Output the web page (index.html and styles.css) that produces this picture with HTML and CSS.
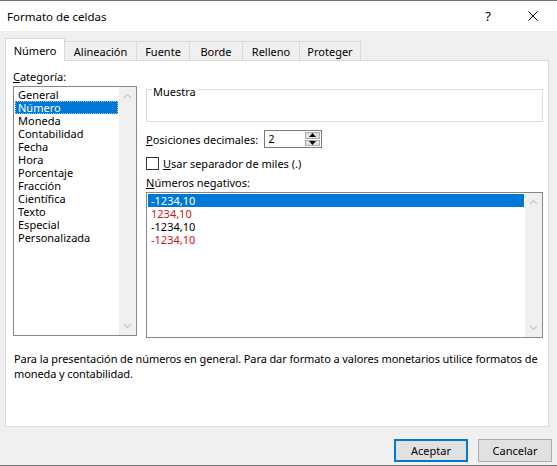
FILE: index.html
```html
<!DOCTYPE html>
<html lang="es">
<head>
<meta charset="utf-8">
<title>Formato de celdas</title>
<link rel="stylesheet" href="styles.css">
</head>
<body>
<div class="window">
  <div class="titlebar">
    <span class="title">Formato de celdas</span>
    <span class="help">?</span>
    <span class="close">
      <svg width="10" height="10" viewBox="0 0 10 10"><path d="M0.5 0.5 L9.5 9.5 M9.5 0.5 L0.5 9.5" stroke="#000" stroke-width="1" fill="none"/></svg>
    </span>
  </div>
  <div class="body">
    <div class="tabs">
      <div class="tab active t1">Número</div>
      <div class="tab t2">Alineación</div>
      <div class="tab t3">Fuente</div>
      <div class="tab t4">Borde</div>
      <div class="tab t5">Relleno</div>
      <div class="tab t6">Proteger</div>
    </div>
    <div class="panel">
      <div class="columns">
        <div class="leftcol">
          <div class="label"><u>C</u>ategoría:</div>
          <div class="listbox catlist">
            <div class="items">
              <div class="item">General</div>
              <div class="item selected focus">Número</div>
              <div class="item">Moneda</div>
              <div class="item">Contabilidad</div>
              <div class="item">Fecha</div>
              <div class="item">Hora</div>
              <div class="item">Porcentaje</div>
              <div class="item">Fracción</div>
              <div class="item">Científica</div>
              <div class="item">Texto</div>
              <div class="item">Especial</div>
              <div class="item">Personalizada</div>
            </div>
            <div class="scrollbar">
              <svg class="arr" width="9" height="6" viewBox="0 0 9 6"><path d="M1 5 L4.5 1.5 L8 5" stroke="#c4c4c4" stroke-width="1.2" fill="none"/></svg>
              <svg class="arr" width="9" height="6" viewBox="0 0 9 6"><path d="M1 1 L4.5 4.5 L8 1" stroke="#c4c4c4" stroke-width="1.2" fill="none"/></svg>
            </div>
          </div>
        </div>
        <div class="rightcol">
          <div class="groupbox">
            <span class="legend">Muestra</span>
          </div>
          <div class="row decimals">
            <span><u>P</u>osiciones decimales:</span>
            <div class="spin">
              <span class="spinval">2</span>
              <div class="spinbtns">
                <div class="sbtn"><svg width="7" height="4" viewBox="0 0 7 4"><path d="M0 4 L3.5 0 L7 4 Z" fill="#000"/></svg></div>
                <div class="sbtn"><svg width="7" height="4" viewBox="0 0 7 4"><path d="M0 0 L3.5 4 L7 0 Z" fill="#000"/></svg></div>
              </div>
            </div>
          </div>
          <div class="row check">
            <span class="box"></span>
            <span><u>U</u>sar separador de miles (.)</span>
          </div>
          <div class="label neglabel"><u>N</u>úmeros negativos:</div>
          <div class="listbox neglist">
            <div class="items">
              <div class="item selected">-1234,10</div>
              <div class="item red">1234,10</div>
              <div class="item">-1234,10</div>
              <div class="item red">-1234,10</div>
            </div>
            <div class="scrollbar">
              <svg class="arr" width="9" height="6" viewBox="0 0 9 6"><path d="M1 5 L4.5 1.5 L8 5" stroke="#c4c4c4" stroke-width="1.2" fill="none"/></svg>
              <svg class="arr" width="9" height="6" viewBox="0 0 9 6"><path d="M1 1 L4.5 4.5 L8 1" stroke="#c4c4c4" stroke-width="1.2" fill="none"/></svg>
            </div>
          </div>
        </div>
      </div>
      <p class="desc">Para la presentación de números en general. Para dar formato a valores monetarios utilice formatos de moneda y contabilidad.</p>
    </div>
    <div class="buttons">
      <div class="btn default">Aceptar</div>
      <div class="btn">Cancelar</div>
    </div>
  </div>
</div>
</body>
</html>
```
FILE: styles.css
```css
* { box-sizing: border-box; }
html, body { margin: 0; padding: 0; }
body {
  width: 557px;
  height: 466px;
  overflow: hidden;
  background: #f0f0f0;
  font-family: "Noto Sans", "DejaVu Sans", sans-serif;
  font-size: 11px;
  color: #000;
}
u { text-decoration: underline; text-underline-offset: 1px; }
.window {
  height: 466px;
  border-top: 1px solid #6f6f6f;
  border-bottom: 1px solid #6f6f6f;
  display: flex;
  flex-direction: column;
}
.titlebar {
  height: 30px;
  background: #fff;
  display: flex;
  align-items: center;
  padding-left: 7px;
  flex: none;
  font-size: 11.5px;
}
.title { flex: 1; }
.help { width: 46px; text-align: center; font-size: 13px; }
.close { width: 46px; display: flex; justify-content: center; padding-right: 2px; }
.body {
  flex: 1;
  display: flex;
  flex-direction: column;
  padding: 7px 8px 0 5px;
}
.tabs {
  display: flex;
  align-items: flex-end;
  height: 22px;
  position: relative;
  z-index: 1;
}
.tab {
  height: 19px;
  border: 1px solid #d9d9d9;
  border-bottom: none;
  border-left: none;
  background: #f0f0f0;
  display: flex;
  align-items: center;
  justify-content: center;
  line-height: 1;
  padding-top: 1px;
}
.tab.active {
  height: 23px;
  background: #fff;
  border-left: 1px solid #d9d9d9;
  margin-bottom: -1px;
  padding-top: 0;
}
.t1 { width: 60px; }
.t2 { width: 72px; }
.t3 { width: 53px; }
.t4 { width: 53px; }
.t5 { width: 57px; }
.t6 { width: 61px; }
.panel {
  height: 367px;
  background: #fff;
  border: 1px solid #d9d9d9;
  padding: 7px 5px 0 7px;
  display: flex;
  flex-direction: column;
}
.columns { display: flex; gap: 9px; }
.leftcol { width: 124px; display: flex; flex-direction: column; }
.label { height: 18px; line-height: 18px; }
.listbox {
  border: 1px solid #828790;
  background: #fff;
  display: flex;
}
.catlist { height: 250px; }
.items { flex: 1; padding: 1px 1px; }
.item {
  height: 13px;
  line-height: 13px;
  padding-left: 3px;
  white-space: nowrap;
}
.item.selected { background: #0078d7; color: #fff; }
.item.focus { outline: 1px dotted #9fc7ec; outline-offset: -1px; }
.item.red { color: #d1141c; }
.scrollbar {
  width: 17px;
  background: #f0f0f0;
  display: flex;
  flex-direction: column;
  justify-content: space-between;
  align-items: center;
  padding: 6px 0 6px;
}
.rightcol { flex: 1; display: flex; flex-direction: column; }
.groupbox {
  margin-top: 21px;
  height: 33px;
  border: 1px solid #dcdcdc;
  position: relative;
}
.legend {
  position: absolute;
  top: -6px;
  left: 5px;
  background: #fff;
  padding: 0 1px;
  line-height: 16px;
}
.row { display: flex; align-items: center; }
.decimals { margin-top: 8px; height: 18px; gap: 6px; }
.spin {
  width: 58px;
  height: 18px;
  border: 1px solid #7a7a7a;
  display: flex;
}
.spinval { flex: 1; padding-left: 3px; line-height: 16px; }
.spinbtns { width: 17px; display: flex; flex-direction: column; padding: 1px; gap: 1px; }
.sbtn {
  flex: 1;
  background: #e1e1e1;
  border: 1px solid #adadad;
  display: flex;
  align-items: center;
  justify-content: center;
}
.check { margin-top: 8px; height: 14px; gap: 4px; }
.box {
  width: 13px;
  height: 13px;
  border: 1px solid #333;
  background: #fff;
}
.neglabel { margin-top: 4px; }
.neglist { height: 146px; }
.desc {
  margin: 13px -8px 0 1px;
  line-height: 15px;
  letter-spacing: -0.1px;
}
.buttons {
  display: flex;
  justify-content: flex-end;
  gap: 10px;
  margin-top: 12px;
  margin-right: -3px;
}
.btn {
  width: 74px;
  height: 23px;
  background: #e1e1e1;
  border: 1px solid #adadad;
  display: flex;
  align-items: center;
  justify-content: center;
}
.btn.default { border: 2px solid #0078d7; }
```
